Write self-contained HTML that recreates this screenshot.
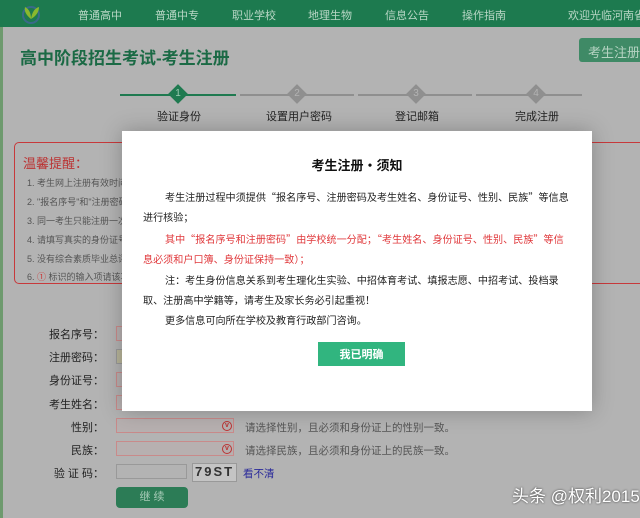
<!DOCTYPE html>
<html><head><meta charset="utf-8"><style>
*{margin:0;padding:0;box-sizing:border-box}
html,body{width:640px;height:518px;overflow:hidden}
body{background:#b3b3b3;font-family:"Liberation Sans","Noto Sans CJK SC",sans-serif;position:relative}
.strip{position:absolute;left:0;top:0;width:3px;height:518px;background:#6e9a6e}
.nav{position:absolute;left:0;top:0;width:640px;height:27px;background:#1d7a4f;color:#b9d7c6;font-size:11px}
.nav span{position:absolute;top:7px}
.title{position:absolute;left:20px;top:44px;font-size:17px;font-weight:bold;color:#1b6a45}
.btn1{position:absolute;left:579px;top:38px;width:70px;height:24px;background:#3f8a66;border-radius:3px;color:#b5d3c2;font-size:13px;padding:4px 9px;white-space:nowrap;overflow:hidden}
.line{position:absolute;top:94px;height:2px;background:#8f8f8f}
.dia{position:absolute;top:87px;width:14px;height:14px;transform:rotate(45deg);background:#8f8f8f}
.num{position:absolute;top:88px;width:14px;text-align:center;color:#b3b3b3;font-size:10px}
.lbl{position:absolute;top:108px;font-size:11px;color:#222}
.warn{position:absolute;left:14px;top:142px;width:640px;height:142px;border:1px solid #c7393b;border-radius:5px}
.warn h4{position:absolute;left:8px;top:10px;color:#b33;font-size:13px;font-weight:normal}
.warn p{position:absolute;left:12px;font-size:9px;color:#555;white-space:nowrap}
.fl{position:absolute;width:104px;text-align:right;font-size:11px;color:#222}
.in{position:absolute;left:116px;height:15px;border:1px solid #c98a8a;background:#b7b0b0}
.hint{position:absolute;font-size:10.5px;color:#555}
.ic{position:absolute;width:10px;height:10px;border:1px solid #b33;border-radius:50%;font-size:7px;line-height:8px;text-align:center;color:#b33;font-weight:bold}
.modal{position:absolute;left:122px;top:131px;width:470px;height:280px;background:#fff;box-shadow:0 0 20px rgba(0,0,0,.25);font-family:"Noto Sans CJK SC","Liberation Sans",sans-serif}
.modal h3{text-align:center;font-size:13px;margin-top:24px;color:#111}
.modal p{position:absolute;left:21px;width:430px;font-size:10.1px;line-height:20px;color:#222;text-indent:22px}
.ok{position:absolute;left:196px;top:211px;width:87px;height:24px;background:#31b57f;color:#fff;font-size:11px;font-weight:bold;text-align:center;line-height:24px}
</style></head><body>
<div class="strip"></div>
<div class="nav">
<svg style="position:absolute;left:20px;top:3px" width="22" height="21"><circle cx="11" cy="12" r="8" fill="none" stroke="#3a6a8a" stroke-width="2"/><path d="M11 16 C6 12 4 8 5 4 C9 6 11 10 11 16 C12 9 15 5 19 4 C19 9 16 13 11 16Z" fill="#8ab82e"/></svg>
<span style="left:78px">普通高中</span><span style="left:155px">普通中专</span><span style="left:232px">职业学校</span><span style="left:308px">地理生物</span><span style="left:385px">信息公告</span><span style="left:462px">操作指南</span><span style="left:568px;white-space:nowrap">欢迎光临河南省</span>
</div>
<div class="title">高中阶段招生考试-考生注册</div>
<div class="btn1">考生注册指南</div>
<div class="line" style="left:120px;width:116px;background:#1f7a50"></div>
<div class="line" style="left:240px;width:114px"></div>
<div class="line" style="left:358px;width:114px"></div>
<div class="line" style="left:476px;width:106px"></div>
<div class="dia" style="left:171px;background:#1f7a50"></div><div class="num" style="left:171px;color:#9ccbb2">1</div>
<div class="dia" style="left:290px"></div><div class="num" style="left:290px">2</div>
<div class="dia" style="left:409px"></div><div class="num" style="left:409px">3</div>
<div class="dia" style="left:529px"></div><div class="num" style="left:529px">4</div>
<div class="lbl" style="left:157px">验证身份</div><div class="lbl" style="left:266px">设置用户密码</div><div class="lbl" style="left:395px">登记邮箱</div><div class="lbl" style="left:515px">完成注册</div>
<div class="warn"><h4>温馨提醒：</h4>
<p style="top:33px">1. 考生网上注册有效时间</p><p style="top:52px">2. "报名序号"和"注册密码</p><p style="top:71px">3. 同一考生只能注册一次</p><p style="top:90px">4. 请填写真实的身份证号</p><p style="top:109px">5. 没有综合素质毕业总评</p><p style="top:127px">6. <span style="color:#c33">①</span> 标识的输入项请该项</p></div>
<div class="fl" style="top:326px">报名序号：</div><div class="in" style="top:326px;width:10px"></div>
<div class="fl" style="top:349px">注册密码：</div><div class="in" style="top:349px;width:10px;background:#b8b59a;border-color:#999"></div>
<div class="fl" style="top:372px">身份证号：</div><div class="in" style="top:372px;width:10px"></div>
<div class="fl" style="top:396px">考生姓名：</div><div class="in" style="top:395px;width:120px"></div><div class="ic" style="left:224px;top:398px">!</div><div class="hint" style="left:247px;top:397px">请填写真实姓名，且必须和身份证上的姓名一致。</div>
<div class="fl" style="top:419px">性别：</div><div class="in" style="top:418px;width:118px"></div><div class="ic" style="left:222px;top:421px">v</div><div class="hint" style="left:245px;top:420px">请选择性别，且必须和身份证上的性别一致。</div>
<div class="fl" style="top:442px">民族：</div><div class="in" style="top:441px;width:118px"></div><div class="ic" style="left:222px;top:444px">v</div><div class="hint" style="left:245px;top:443px">请选择民族，且必须和身份证上的民族一致。</div>
<div class="fl" style="top:465px">验 证 码：</div><div class="in" style="top:464px;width:71px;border-color:#999;background:#b3b3b3"></div>
<div style="position:absolute;left:192px;top:463px;width:45px;height:19px;background:#c4c4c4;border:1px solid #999;font-size:13px;font-weight:bold;color:#333;letter-spacing:2px;padding-left:2px">79ST</div>
<div style="position:absolute;left:243px;top:466px;font-size:10.5px;color:#2a2a9a">看不清</div>
<div style="position:absolute;left:116px;top:487px;width:72px;height:21px;background:#2c7c56;border-radius:4px;color:#a8cbb8;font-size:11px;text-align:center;line-height:21px">继 续</div>
<div style="position:absolute;left:512px;top:482px;font-size:17px;color:#fff;white-space:nowrap;text-shadow:0 0 2px #333">头条 @权利2015</div>
<div class="modal"><h3>考生注册•须知</h3>
<p style="top:56px">考生注册过程中须提供“报名序号、注册密码及考生姓名、身份证号、性别、民族”等信息进行核验；</p>
<p style="top:98px;color:#e0393c">其中“报名序号和注册密码”由学校统一分配；“考生姓名、身份证号、性别、民族”等信息必须和户口簿、身份证保持一致）；</p>
<p style="top:139px">注：考生身份信息关系到考生理化生实验、中招体育考试、填报志愿、中招考试、投档录取、注册高中学籍等，请考生及家长务必引起重视！</p>
<p style="top:179px">更多信息可向所在学校及教育行政部门咨询。</p>
<div class="ok">我已明确</div></div>
</body></html>
